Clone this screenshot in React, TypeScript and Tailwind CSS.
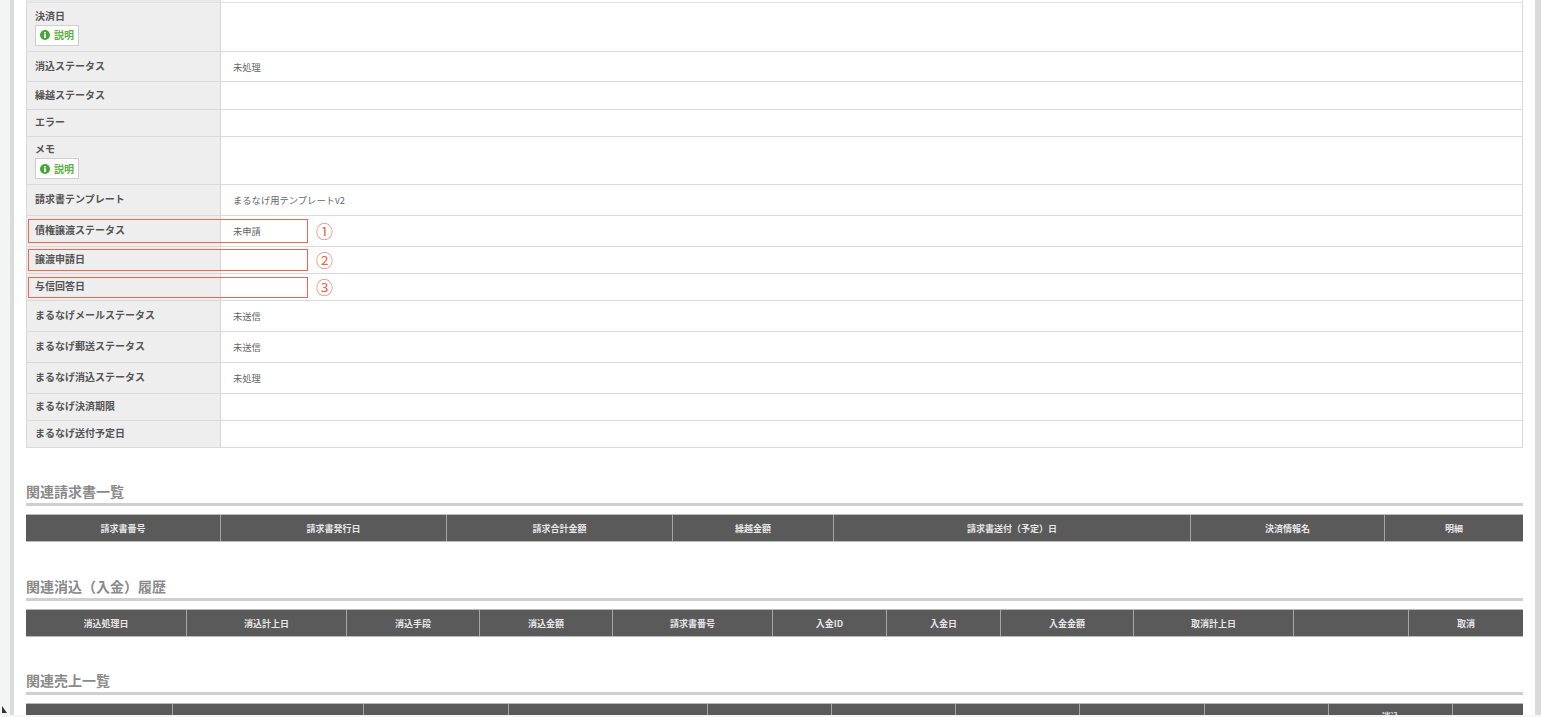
const font = { fontFamily: '"Noto Sans CJK JP", "Liberation Sans", sans-serif' };

function Help() {
  return (
    <div className="mt-[2px] flex h-[21px] w-[44px] items-center justify-center gap-[4px] border border-[#cfcfcf] bg-white text-[10px] font-bold leading-none text-[#5cb043]">
      <svg width="10" height="10" viewBox="0 0 10 10" className="shrink-0">
        <circle cx="5" cy="5" r="5" fill="#46a637" />
        <rect x="4.1" y="2" width="1.8" height="1.5" fill="#ffffff" />
        <rect x="4.1" y="4.2" width="1.8" height="3.8" fill="#ffffff" />
      </svg>
      <span>説明</span>
    </div>
  );
}

type RowT = { h: string; label: string; value?: string; help?: boolean; mark?: string; box?: string };

function Row({ h, label, value, help, mark, box }: RowT) {
  return (
    <div className={`relative flex ${h} border-b border-[#d9d9d9]`}>
      <div className={`flex w-[194px] shrink-0 flex-col justify-center border-r border-[#d4d4d4] bg-[#eeeeee] pl-[8px] text-[10px] font-bold leading-[14px] text-[#555555] ${help ? '' : 'pb-[2px]'}`}>
        <span>{label}</span>
        {help && <Help />}
      </div>
      <div className="flex flex-1 items-center pl-[12px] pt-[2px] text-[9.3px] text-[#666666]">{value}</div>
      {mark && (
        <>
          <div className={`absolute left-[1px] w-[280px] border-[1.5px] border-[#e8694f] ${box}`} />
          <div className="absolute left-[289px] top-0 bottom-0 flex items-center text-[17px] text-[#e8694f]">{mark}</div>
        </>
      )}
    </div>
  );
}

function Section({ title, className }: { title: string; className: string }) {
  return (
    <div className={`border-b-[3px] border-[#d0d0d0] pb-[2px] text-[14px] font-bold leading-[20px] text-[#8a8a8a] ${className}`}>
      {title}
    </div>
  );
}

function Head({ cols, grid, h }: { cols: string[]; grid: string; h: string }) {
  return (
    <div className={`mt-[8px] grid ${h} ${grid} border-y border-[#b9b9b9] bg-[#5a5a5a] text-[9px] font-bold leading-[13px] text-[#e6e6e6]`}>
      {cols.map((c, i) => (
        <div key={i} className="flex flex-col items-center justify-center border-l border-[#a5a5a5] first:border-l-0">
          {c.split('\n').map((t) => <span key={t}>{t}</span>)}
        </div>
      ))}
    </div>
  );
}

const rows: RowT[] = [
  { h: 'h-[49px]', label: '決済日', help: true },
  { h: 'h-[30px]', label: '消込ステータス', value: '未処理' },
  { h: 'h-[28px]', label: '繰越ステータス' },
  { h: 'h-[27px]', label: 'エラー' },
  { h: 'h-[48px]', label: 'メモ', help: true },
  { h: 'h-[31px]', label: '請求書テンプレート', value: 'まるなげ用テンプレートv2' },
  { h: 'h-[31px]', label: '債権譲渡ステータス', value: '未申請', mark: '①', box: 'top-[3px] bottom-[3px]' },
  { h: 'h-[27px]', label: '譲渡申請日', mark: '②', box: 'top-[2px] bottom-[2px]' },
  { h: 'h-[27px]', label: '与信回答日', mark: '③', box: 'top-[3px] bottom-[2px]' },
  { h: 'h-[31px]', label: 'まるなげメールステータス', value: '未送信' },
  { h: 'h-[31px]', label: 'まるなげ郵送ステータス', value: '未送信' },
  { h: 'h-[31px]', label: 'まるなげ消込ステータス', value: '未処理' },
  { h: 'h-[27px]', label: 'まるなげ決済期限' },
  { h: 'h-[27px]', label: 'まるなげ送付予定日' },
];

export default function App() {
  return (
    <div style={font} className="relative flex h-[717px] w-[1541px] overflow-hidden bg-[#f6f7f7]">
      <div className="h-full w-[10px] shrink-0 bg-[#f3f5f5]" />
      <div className="h-full w-[4px] shrink-0 bg-[#d9dcdc]" />
      <div className="h-full w-[1521px] shrink-0 bg-white px-[12px]">
        <div className="flex h-[3px] border-x border-b border-[#e2e2e2]">
          <div className="w-[194px] shrink-0 border-r border-[#d4d4d4] bg-[#e9e9e9]" />
        </div>
        <div className="border-x border-[#d9d9d9]">
          {rows.map((r) => <Row key={r.label} {...r} />)}
        </div>
        <Section title="関連請求書一覧" className="mt-[33px]" />
        <Head
          h="h-[28px]"
          grid="grid-cols-[194px_226px_226px_161px_357px_194px_1fr]"
          cols={['請求書番号', '請求書発行日', '請求合計金額', '繰越金額', '請求書送付（予定）日', '決済情報名', '明細']}
        />
        <Section title="関連消込（入金）履歴" className="mt-[34px]" />
        <Head
          h="h-[28px]"
          grid="grid-cols-[160px_160px_133px_133px_160px_114px_114px_133px_160px_115px_1fr]"
          cols={['消込処理日', '消込計上日', '消込手段', '消込金額', '請求書番号', '入金ID', '入金日', '入金金額', '取消計上日', '', '取消']}
        />
        <Section title="関連売上一覧" className="mt-[33px]" />
        <Head
          h="h-[40px]"
          grid="grid-cols-[146px_191px_145px_199px_124px_124px_124px_125px_124px_124px_1fr]"
          cols={['', '', '', '', '', '', '', '', '', '消込\nステータス', '']}
        />
      </div>
      <div className="h-full flex-1 bg-[#d9dbdb]" />
      <div className="absolute bottom-0 left-0 h-[2px] w-full bg-[#f6f6f6]" />
      <svg width="6" height="9" viewBox="0 0 6 9" className="absolute bottom-[2px] left-[2px]">
        <path d="M0 0 L0 7 L5 7 Z" fill="#333333" />
      </svg>
    </div>
  );
}
